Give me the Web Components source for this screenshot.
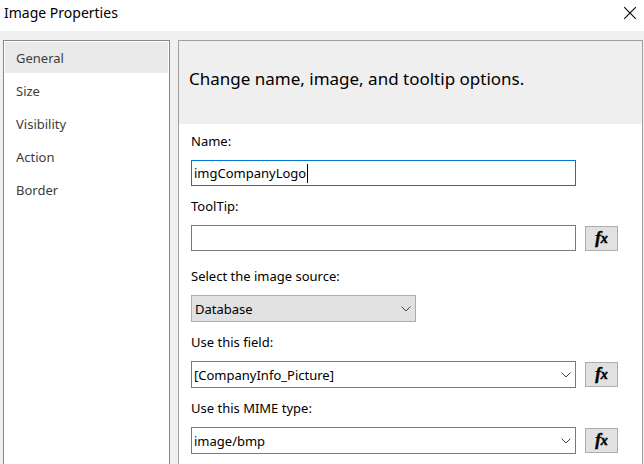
<!DOCTYPE html>
<html lang="en">
<head>
<meta charset="utf-8">
<title>Image Properties</title>
<style>
  html, body { height: 100%; margin: 0; }
  body {
    font: 13px/20px "Noto Sans", "Open Sans", sans-serif;
    color: #000;
    background: #f0f0f0;
    --edge: #7a7a7a;
    --face: #e1e1e1;
    --face-edge: #adadad;
    --accent: #0078d7;
  }
</style>
</head>
<body>
<dialog-window heading="Image Properties">
  <page-list slot="nav">
    <page-link current>General</page-link>
    <page-link>Size</page-link>
    <page-link>Visibility</page-link>
    <page-link>Action</page-link>
    <page-link>Border</page-link>
  </page-list>
  <option-pane>
    <span slot="heading">Change name, image, and tooltip options.</span>
    <text-field label="Name:" value="imgCompanyLogo" active></text-field>
    <text-field label="ToolTip:" value="" last>
      <fx-button slot="action"></fx-button>
    </text-field>
    <select-field label="Select the image source:" value="Database" compact></select-field>
    <select-field label="Use this field:" value="[CompanyInfo_Picture]">
      <fx-button slot="action"></fx-button>
    </select-field>
    <select-field label="Use this MIME type:" value="image/bmp">
      <fx-button slot="action"></fx-button>
    </select-field>
  </option-pane>
</dialog-window>

<script>
class BaseElement extends HTMLElement {
  constructor() {
    super();
    this.attachShadow({ mode: 'open' });
  }
  connectedCallback() {
    this.shadowRoot.innerHTML = '<style>*{box-sizing:border-box}</style>' + this.render();
    this.ready();
  }
  ready() {}
}

const fieldStyles = `
  :host { display: block; }
  :host([last]) { margin-bottom: 5px; }
  label { display: block; margin-bottom: 9px; }
  .row { display: grid; grid-template-columns: minmax(0, 1fr) 33px; column-gap: 9px; align-items: center; }
  .box { display: grid; grid-template-columns: minmax(0, 1fr); align-items: center; }
  .box > * { grid-area: 1 / 1; }
  input, select {
    width: 100%; margin: 0; border: 1px solid var(--edge); border-radius: 0;
    background: #fff; color: #000; font: inherit; outline: none; appearance: none;
  }`;

customElements.define('dialog-window', class extends BaseElement {
  render() {
    return `<style>
      :host { display: flex; flex-direction: column; min-height: 100%; }
      header { display: flex; justify-content: space-between; align-items: center; height: 31px; padding: 0 7px 5px 4px; background: #fff; }
      h1 { margin: 0; font-size: 14px; font-weight: 400; line-height: 20px; }
      button { display: flex; padding: 0; border: 0; background: none; }
      main { flex: 1; display: grid; grid-template-columns: 167px minmax(0, 1fr); column-gap: 8px; padding: 9px 1px 0 3px; }
    </style>
    <header>
      <h1>${this.getAttribute('heading')}</h1>
      <button type="button" aria-label="Close">
        <svg width="14" height="14" viewBox="0 0 14 14" fill="none" stroke="#000" stroke-width="1.1"><path d="M1.2 1.2 12.8 12.8M12.8 1.2 1.2 12.8"/></svg>
      </button>
    </header>
    <main><slot name="nav"></slot><slot></slot></main>`;
  }
});

customElements.define('page-list', class extends BaseElement {
  render() {
    return `<style>
      :host { display: block; box-sizing: border-box; border: 1px solid #828790; border-bottom: 0; background: #fff; padding: 1px; }
      nav { display: flex; flex-direction: column; gap: 2px; }
    </style><nav><slot></slot></nav>`;
  }
});

customElements.define('page-link', class extends BaseElement {
  render() {
    return `<style>
      :host { display: block; }
      a { display: block; padding: 6px 11px 5px; color: #3c3c3c; text-decoration: none; }
      :host([current]) a { background: #eaeaea; }
    </style><a href="#"><slot></slot></a>`;
  }
});

customElements.define('option-pane', class extends BaseElement {
  render() {
    return `<style>
      :host { display: block; box-sizing: border-box; border: 1px solid #a0a0a0; border-bottom: 0; background: #fff; }
      h2 { margin: 0; padding: 26px 10px 33px; background: #efefef; font-size: 17px; font-weight: 400; line-height: 24px; }
      form { display: flex; flex-direction: column; gap: 10px; padding: 7px 24px 10px 12px; }
    </style>
    <h2><slot name="heading"></slot></h2>
    <form><slot></slot></form>`;
  }
});

customElements.define('text-field', class extends BaseElement {
  render() {
    return `<style>${fieldStyles}
      input { height: 26px; padding: 0 2px; }
      .caret { display: none; width: 1px; height: 19px; background: #000; }
      :host([active]) input { border-color: var(--accent); }
      :host([active]) .caret { display: block; }
    </style>
    <label for="control">${this.getAttribute('label')}</label>
    <div class="row">
      <div class="box">
        <input id="control" type="text" value="${this.getAttribute('value')}">
        <span class="caret"></span>
      </div>
      <slot name="action"></slot>
    </div>`;
  }
  ready() {
    const input = this.shadowRoot.querySelector('input');
    const caret = this.shadowRoot.querySelector('.caret');
    const ctx = document.createElement('canvas').getContext('2d');
    const place = () => {
      ctx.font = getComputedStyle(input).font;
      caret.style.marginLeft = Math.ceil(ctx.measureText(input.value).width) + 3 + 'px';
    };
    input.addEventListener('input', place);
    place();
  }
});

customElements.define('select-field', class extends BaseElement {
  render() {
    return `<style>${fieldStyles}
      select { height: 27px; padding: 0 24px 0 2px; }
      svg { justify-self: end; margin-right: 5px; pointer-events: none; }
      :host([compact]) .box { width: 225px; max-width: 100%; }
      :host([compact]) select { padding-left: 3px; background: var(--face); border-color: var(--face-edge); }
    </style>
    <label for="control">${this.getAttribute('label')}</label>
    <div class="row">
      <div class="box">
        <select id="control"><option selected>${this.getAttribute('value')}</option></select>
        <svg width="10" height="6" viewBox="0 0 10 6" fill="none" stroke="#444" stroke-width="1"><path d="M.6.6 5 5 9.4.6"/></svg>
      </div>
      <slot name="action"></slot>
    </div>`;
  }
});

customElements.define('fx-button', class extends BaseElement {
  render() {
    return `<style>
      :host { display: block; }
      button {
        display: block; width: 100%; height: 25px; padding: 0;
        border: 1px solid var(--face-edge); background: var(--face); color: #000; text-align: center;
        font: italic 700 17px/20px "Liberation Serif", serif; -webkit-text-stroke: 0.5px #000;
      }
      small { font-size: 14px; }
    </style><button type="button" aria-label="Expression">f<small>x</small></button>`;
  }
});
</script>
</body>
</html>
